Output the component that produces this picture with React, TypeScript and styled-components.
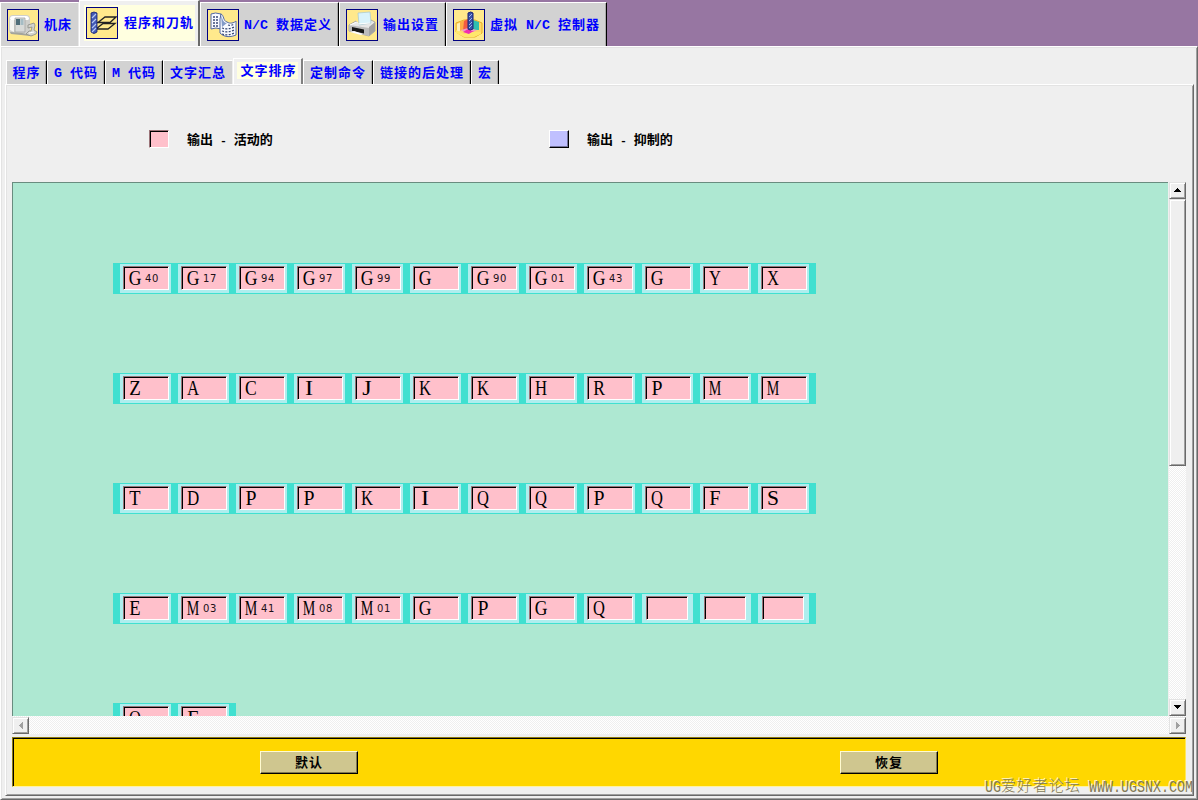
import React from 'react';
import styled, { createGlobalStyle, css } from 'styled-components';

const Global = createGlobalStyle`
  * { box-sizing: border-box; }
  body { margin: 0; overflow: hidden; background: #efefef; }
`;

const raised = css`
  border: 1px solid;
  border-color: #e3e3e3 #696969 #696969 #e3e3e3;
  box-shadow: inset 1px 1px 0 #fff, inset -1px -1px 0 #a0a0a0;
`;

const Window = styled.div`
  position: relative;
  width: 1198px;
  height: 800px;
  display: flex;
  flex-direction: column;
  background: #efefef;
  font-family: 'Liberation Mono', 'Noto Sans CJK SC', monospace;
  font-weight: bold;
`;

const MainTabs = styled.div`
  display: flex;
  align-items: flex-end;
  height: 46px;
  background: #9776a2;
`;

const MainTab = styled.div<{ $w: number; $active?: boolean }>`
  width: ${p => p.$w}px;
  height: ${p => (p.$active ? 46 : 44)}px;
  flex: none;
  display: flex;
  align-items: flex-start;
  padding: ${p => (p.$active ? '4px 0 0 4px' : '6px 0 0 6px')};
  color: #0000ff;
  background: ${p => (p.$active ? '#efefef' : '#d2d2d2')};
  border-top: 1px solid #fff;
  border-left: 1px solid #fff;
  border-right: ${p => (p.$active ? '2px solid #696969' : '1px solid #000')};
  box-shadow: ${p => (p.$active ? 'none' : 'inset -1px 0 0 #aaa')};
  &:first-child { border-right-color: #e8e8e8; box-shadow: none; }
`;

const MainLabel = styled.div<{ $active?: boolean }>`
  display: flex;
  align-items: center;
  height: ${p => (p.$active ? 36 : 32)}px;
  padding: ${p => (p.$active ? '0 1px 0 2px' : '0')};
  background: ${p => (p.$active ? '#ffffe0' : 'transparent')};
  gap: ${p => (p.$active ? 6 : 5)}px;
`;

const IconFrame = styled.div`
  width: 32px;
  height: 32px;
  border: 1px solid #000080;
  background: #ffe98c;
  svg { display: block; width: 30px; height: 30px; }
`;

const Caption = styled.div`
  padding-bottom: 4px;
`;

const Panel = styled.div`
  flex: 1;
  min-height: 0;
  display: flex;
  flex-direction: column;
  padding: 11px 3px 3px 4px;
  border: 1px solid;
  border-color: #fff #696969 #696969 #fff;
  box-shadow: inset 1px 1px 0 #e3e3e3, inset -1px -1px 0 #a0a0a0;
`;

const SubTabs = styled.div`
  display: flex;
  align-items: flex-end;
  height: 26px;
  padding-left: 1px;
`;

const SubTab = styled.div<{ $w: number; $active?: boolean; $edge?: boolean }>`
  width: ${p => p.$w}px;
  height: ${p => (p.$active ? 26 : 24)}px;
  flex: none;
  display: flex;
  justify-content: center;
  padding-top: ${p => (p.$active ? 3 : 2)}px;
  color: #0000ff;
  background: ${p => (p.$active ? '#efefef' : '#d2d2d2')};
  border-top: 1px solid #fff;
  border-left: 1px solid #fff;
  border-right: ${p => (p.$active ? '2px solid #808080' : p.$edge ? '1px solid #eee' : '1px solid #000')};
  box-shadow: ${p => (p.$active || p.$edge ? 'none' : 'inset -1px 0 0 #aaa')};
`;

const SubLabel = styled.div<{ $active?: boolean }>`
  height: 17px;
  padding: ${p => (p.$active ? '0 1px 0 3px' : '0 2px')};
  line-height: 16px;
  background: ${p => (p.$active ? '#ffffe0' : 'transparent')};
  & > span { margin-top: ${p => (p.$active ? -1 : 0)}px; }
`;

const Page = styled.div`
  flex: 1;
  min-height: 0;
  display: flex;
  flex-direction: column;
  padding: 0 5px 6px 6px;
  border: 1px solid;
  border-color: #fff #696969 #696969 #fff;
  box-shadow: inset 1px 1px 0 #e3e3e3, inset -1px -1px 0 #a0a0a0;
`;

const Legend = styled.div`
  height: 97px;
  display: flex;
  align-items: center;
  padding: 11px 0 0 137px;
`;

const LegendItem = styled.div`
  width: 400px;
  display: flex;
  align-items: center;
  gap: 18px;
  color: #000;
  & > span { margin-top: -2px; }
`;

const Swatch = styled.div<{ $sunken?: boolean }>`
  width: 20px;
  height: 18px;
  border: 1px solid;
  ${p =>
    p.$sunken
      ? css`
          background: #ffc0cb;
          border-color: #9b7479 #fff #fff #9b7479;
          box-shadow: inset 1px 1px 0 #000;
        `
      : css`
          background: #c0c0ff;
          border-color: #fff #000 #000 #fff;
          box-shadow: inset -1px -1px 0 #74749b;
        `}
`;

const Scroller = styled.div`
  display: grid;
  grid-template-columns: 1156px 17px;
  grid-template-rows: 534px 18px;
  column-gap: 1px;
`;

const Canvas = styled.div`
  overflow: hidden;
  display: flex;
  flex-direction: column;
  align-items: flex-start;
  gap: 79px;
  padding: 80px 0 0 100px;
  background: #aee8d2;
  border-top: 1px solid #698c7f;
  border-left: 1px solid #698c7f;
`;

const track = css`
  background: conic-gradient(#fff 25%, #efefef 0 50%, #fff 0 75%, #efefef 0) 0 0 / 2px 2px;
`;

const VTrack = styled.div`
  ${track}
  display: flex;
  flex-direction: column;
`;

const HTrack = styled.div`
  ${track}
  grid-column: 1 / 3;
  display: flex;
  justify-content: space-between;
  padding-top: 1px;
`;

const ScrollButton = styled.div`
  ${raised}
  width: 17px;
  height: 17px;
  flex: none;
  display: flex;
  align-items: center;
  justify-content: center;
  background: #efefef;
  svg { display: block; }
  ${VTrack} & { padding-bottom: 1px; }
  ${VTrack} &:last-child { margin-top: auto; }
`;

const Thumb = styled.div`
  ${raised}
  height: 267px;
  background: #efefef;
`;

const Strip = styled.div`
  display: flex;
  flex: none;
  gap: 7px;
  height: 31px;
  padding: 1px 7px;
  background: #40e0d0;
`;

const Slot = styled.div`
  width: 51px;
  height: 29px;
  padding: 2px 3px;
  background: #afeeee;
`;

const Word = styled.div<{ $empty?: boolean }>`
  width: ${p => (p.$empty ? 42 : 46)}px;
  height: 24px;
  margin-left: ${p => (p.$empty ? 1 : 0)}px;
  display: flex;
  align-items: center;
  padding-left: 5px;
  color: #000;
  background: #ffc0cb;
  border: 1px solid;
  border-color: #9b7479 #fff #fff #9b7479;
  box-shadow: inset 1px 1px 0 #000;
`;

const Letter = styled.span<{ $scale: number }>`
  width: 12px;
  display: flex;
  justify-content: center;
  font: 22px/22px 'Liberation Serif', serif;
  transform: scaleX(${p => p.$scale});
`;

const Code = styled.span`
  margin: 1px 0 0 4px;
  font: 10px/12px 'DejaVu Sans', sans-serif;
  letter-spacing: 0.6px;
  color: #201018;
`;

const Footer = styled.div`
  width: 1174px;
  height: 50px;
  margin-top: 3px;
  display: flex;
  gap: 482px;
  padding: 13px 0 0 247px;
  background: #ffd700;
  border: 1px solid;
  border-color: #8f7c14 #ffe75c #fff3a0 #8f7c14;
  box-shadow: inset 1px 1px 0 #000;
`;

const Button = styled.div`
  width: 98px;
  height: 23px;
  display: flex;
  align-items: center;
  justify-content: center;
  padding-bottom: 2px;
  color: #000;
  background: #cfc68f;
  border: 1px solid;
  border-color: #fffbd0 #000 #000 #fffbd0;
  box-shadow: inset -1px -1px 0 #807950;
`;

const Latin = styled.span<{ $size: number }>`
  font-size: ${p => p.$size}px;
`;

const Han = styled.span<{ $gap: number }>`
  font-family: 'Noto Sans CJK SC', sans-serif;
  font-size: 13px;
  letter-spacing: ${p => p.$gap}px;
`;

const TextLine = styled.span`
  display: block;
  height: 17px;
  line-height: 17px;
  white-space: pre;
`;

const Watermark = styled.div`
  position: absolute;
  left: 985px;
  top: 779px;
  display: flex;
  height: 18px;
  line-height: 18px;
  white-space: pre;
  font-family: 'Liberation Mono', 'Noto Sans CJK SC', monospace;
  font-weight: normal;
  color: #81795a;
  text-shadow: -1px -1px 0 #fff8d0;
`;

const MarkLatin = styled.span`
  font-size: 13.33px;
  transform: scaleY(1.3);
`;

const MarkHan = styled.span`
  font-size: 15px;
  font-weight: 300;
  letter-spacing: 1px;
`;

function Mixed({ text, compact }: { text: string; compact?: boolean }) {
  const runs = text.match(/[\x20-\x7e]+|[^\x20-\x7e]+/g) ?? [];
  return (
    <TextLine>
      {runs.map((run, i) =>
        run.charCodeAt(0) < 127 ? (
          <Latin key={i} $size={compact ? 11.5 : 13.33}>{run}</Latin>
        ) : (
          <Han key={i} $gap={compact ? 0 : 1}>{run}</Han>
        )
      )}
    </TextLine>
  );
}

const MachineIcon = () => (
  <svg viewBox="0 0 30 30">
    <path d="M1 9q0-4 4-4h13q4 0 4 4v12q0 3-3 3H5q-4 0-4-4z" fill="#cfcfcb" />
    <path d="M2 9q0-3 3-3h13q3 0 3 3l-1 1H3z" fill="#fff" />
    <path d="M2 10h4v12l-4-2z" fill="#f5f5f2" />
    <path d="M7 8h10v14H7z" fill="#d8dad8" stroke="#a3a5a3" strokeWidth=".8" />
    <path d="M8 9h4v6H8z" fill="#4f6d78" />
    <path d="M12.5 9h3v6h-3z" fill="#a5bcc4" />
    <path d="M2 22l12 1 8 2v1l-9-1-10-1z" fill="#a3a49c" />
    <path d="M20 15l6-2 1 2-1 5 3 2-1 2-5 2-5-2 3-3h2l1-4-4 1z" fill="#d3d3cd" stroke="#8c8d86" strokeWidth=".8" />
    <path d="M21 23l5-1" stroke="#fff" />
  </svg>
);

const ToolpathIcon = () => (
  <svg viewBox="0 0 30 30">
    <path d="M11 14.5L18 9h11l-6 5.500H9" fill="none" stroke="#222" strokeWidth="1.3" />
    <path d="M9 21l7-5.500h12l-7 5.500H9L6 25" fill="none" stroke="#222" strokeWidth="1.300" />
    <path d="M4 5q3-2 6 0v19q-3 3-6 0z" fill="#4359b5" stroke="#151f70" strokeWidth=".8" />
    <path d="M5 10l4-4M5 15l4-4M5 20l4-4M5 24l4-4" stroke="#b8caf2" strokeWidth="1.1" />
  </svg>
);

const DataIcon = () => (
  <svg viewBox="0 0 30 30">
    <path d="M3 4q4-2 10 0v15q-5-2-10 0z" fill="#f8faff" stroke="#5268a1" />
    <path d="M13 4c3 1 2 7 6 8 3 2 7 1 9-1v14c-5 2-11 3-16-2V9z" fill="#f8faff" stroke="#5268a1" />
    <path d="M13 5c2 6 3 8 6 8l-5 4z" fill="#839bc8" />
    <path d="M5 7h6M5 10h6M5 13h6M5 16h5" stroke="#384a78" strokeWidth="1.3" strokeDasharray="2 1" />
    <path d="M14 18q6 2 12-1M14 21q6 2 12-1M14 24q6 2 12-1M20 15q3 1 6-1" fill="none" stroke="#384a78" strokeWidth="1.3" strokeDasharray="2 1.4" />
  </svg>
);

const PrinterIcon = () => (
  <svg viewBox="0 0 30 30">
    <path d="M2 15l7-4 2 3 12-1 1-3 4 2v9l-6 5L2 21z" fill="#e8e8e8" stroke="#929292" strokeWidth=".7" />
    <path d="M11 3l12-1 1 11-12 2z" fill="#d9f3fb" stroke="#a6c7d0" strokeWidth=".7" />
    <path d="M22 17l6-5v9l-6 5z" fill="#a2a2a2" />
    <path d="M2 15l20 3v8L2 21z" fill="#bcbcbc" />
    <path d="M5 17l12 2.500v4L5 21z" fill="#171717" />
    <path d="M3 22l11 3 2-1-9-3z" fill="#fff" />
    <path d="M3 15l7-3 1 2 12-1" fill="none" stroke="#fff" />
  </svg>
);

const ControllerIcon = () => (
  <svg viewBox="0 0 30 30">
    <path d="M2 13l8-3h11l7 3v10l-7 4H10l-8-5z" fill="#ffd86b" stroke="#e8ae25" />
    <path d="M3 14l7-3v9l-7 2z" fill="#fff0b5" />
    <path d="M6 12l7-3v10l-7 2z" fill="#ffad45" />
    <path d="M10 11l4-2v11l-5 1z" fill="#f45b42" />
    <path d="M19 10l6 2v8h-6z" fill="#30bfae" />
    <path d="M7 20l7-2 9 2-8 4z" fill="#f09ac5" />
    <path d="M9 22l5-3 6 3-5 2z" fill="#f12eb0" />
    <path d="M2 20l8 4h5l3-2h9v2l-7 3H10l-8-4z" fill="#ffe76b" />
    <path d="M14 3q3-2 5 0v16q-3 2-5 0z" fill="#3950aa" stroke="#1b2477" />
    <path d="M15 7l3-3M15 11l3-3M15 15l3-3M15 18l3-3" stroke="#9fb4eb" />
  </svg>
);

const mainTabs = [
  { w: 79, text: '机床', icon: <MachineIcon /> },
  { w: 121, text: '程序和刀轨', icon: <ToolpathIcon />, active: true },
  { w: 139, text: 'N/C 数据定义', icon: <DataIcon /> },
  { w: 107, text: '输出设置', icon: <PrinterIcon /> },
  { w: 161, text: '虚拟 N/C 控制器', icon: <ControllerIcon /> },
];

const subTabs = [
  { w: 41, text: '程序' },
  { w: 58, text: 'G 代码' },
  { w: 58, text: 'M 代码' },
  { w: 70, text: '文字汇总', edge: true },
  { w: 70, text: '文字排序', active: true },
  { w: 70, text: '定制命令' },
  { w: 98, text: '链接的后处理' },
  { w: 28, text: '宏' },
];

const rows = [
  'G40 G17 G94 G97 G99 G G90 G01 G43 G Y X',
  'Z A C I J K K H R P M M',
  'T D P P K I Q Q P Q F S',
  'E M03 M41 M08 M01 G P G Q - - -',
  'O F',
].map(r => r.split(' '));

const scales: Record<string, number> = {
  G: 0.8, Y: 0.75, X: 0.75, Z: 0.86, A: 0.76, C: 0.8, I: 1.1, J: 1.1, K: 0.76, H: 0.76,
  R: 0.8, P: 0.9, M: 0.64, T: 0.84, D: 0.77, Q: 0.75, F: 0.92, S: 0.98, E: 0.84, O: 0.75,
};

const arrows = {
  up: 'M4 0h1v1h1v1h1v1h1v1H1V3h1V2h1V1h1z',
  down: 'M1 0h7v1H7v1H6v1H5v1H4V3H3V2H2V1H1z',
  left: 'M4 0v7H3V6H2V5H1V4H0V3h1V2h1V1h1V0z',
  right: 'M0 0h1v1h1v1h1v1h1v1H3v1H2v1H1v1H0z',
};

function Arrow({ dir }: { dir: keyof typeof arrows }) {
  const vertical = dir === 'up' || dir === 'down';
  return (
    <svg width={vertical ? 9 : 4} height={vertical ? 4 : 7} shapeRendering="crispEdges">
      <path d={arrows[dir]} fill={vertical ? '#000' : '#a0a0a0'} />
    </svg>
  );
}

export default function App() {
  return (
    <Window>
      <Global />
      <MainTabs>
        {mainTabs.map(t => (
          <MainTab key={t.text} $w={t.w} $active={t.active}>
            <MainLabel $active={t.active}>
              <IconFrame>{t.icon}</IconFrame>
              <Caption><Mixed text={t.text} /></Caption>
            </MainLabel>
          </MainTab>
        ))}
      </MainTabs>
      <Panel>
        <SubTabs>
          {subTabs.map(t => (
            <SubTab key={t.text} $w={t.w} $active={t.active} $edge={t.edge}>
              <SubLabel $active={t.active}>
                <Mixed text={t.text} />
              </SubLabel>
            </SubTab>
          ))}
        </SubTabs>
        <Page>
          <Legend>
            <LegendItem><Swatch $sunken /><Mixed text="输出 - 活动的" compact /></LegendItem>
            <LegendItem><Swatch /><Mixed text="输出 - 抑制的" compact /></LegendItem>
          </Legend>
          <Scroller>
            <Canvas>
              {rows.map((row, r) => (
                <Strip key={r}>
                  {row.map((word, i) => {
                    const empty = word === '-';
                    return (
                      <Slot key={i}>
                        <Word $empty={empty}>
                          {!empty && <Letter $scale={scales[word[0]]}>{word[0]}</Letter>}
                          {word.length > 1 && <Code>{word.slice(1)}</Code>}
                        </Word>
                      </Slot>
                    );
                  })}
                </Strip>
              ))}
            </Canvas>
            <VTrack>
              <ScrollButton><Arrow dir="up" /></ScrollButton>
              <Thumb />
              <ScrollButton><Arrow dir="down" /></ScrollButton>
            </VTrack>
            <HTrack>
              <ScrollButton><Arrow dir="left" /></ScrollButton>
              <ScrollButton><Arrow dir="right" /></ScrollButton>
            </HTrack>
          </Scroller>
          <Footer>
            <Button><Mixed text="默认" /></Button>
            <Button><Mixed text="恢复" /></Button>
          </Footer>
        </Page>
      </Panel>
      <Watermark>
        <MarkLatin>UG</MarkLatin>
        <MarkHan>爱好者论坛</MarkHan>
        <MarkLatin> WWW.UGSNX.COM</MarkLatin>
      </Watermark>
    </Window>
  );
}
